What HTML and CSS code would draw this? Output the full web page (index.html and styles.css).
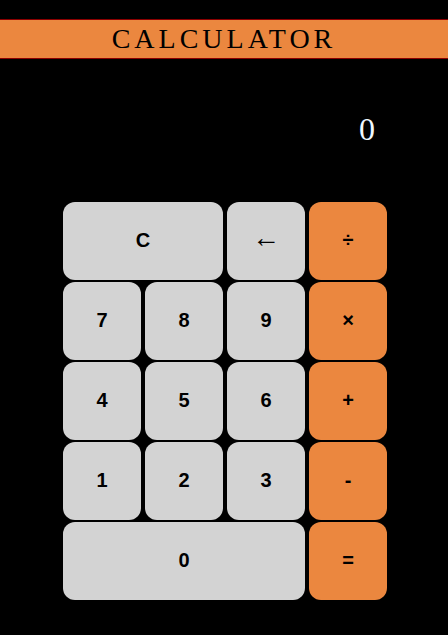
FILE: index.html
```
<!DOCTYPE html>
<html lang="en">
<head>
<meta charset="utf-8">
<meta name="viewport" content="width=device-width, initial-scale=1">
<title>Calculator</title>
<link rel="stylesheet" href="styles.css">
</head>
<body>
<h1 class="title">CALCULATOR</h1>
<main class="calculator">
  <output class="display" aria-label="Result">0</output>
  <div class="keys">
    <button type="button" class="key double">C</button>
    <button type="button" class="key arrow" aria-label="Backspace">←</button>
    <button type="button" class="key operator">÷</button>
    <button type="button" class="key">7</button>
    <button type="button" class="key">8</button>
    <button type="button" class="key">9</button>
    <button type="button" class="key operator">×</button>
    <button type="button" class="key">4</button>
    <button type="button" class="key">5</button>
    <button type="button" class="key">6</button>
    <button type="button" class="key operator">+</button>
    <button type="button" class="key">1</button>
    <button type="button" class="key">2</button>
    <button type="button" class="key">3</button>
    <button type="button" class="key operator">-</button>
    <button type="button" class="key triple">0</button>
    <button type="button" class="key operator">=</button>
  </div>
</main>
</body>
</html>
```
FILE: styles.css
```
* {
  box-sizing: border-box;
}

body {
  margin: 0;
  background: #000;
  font-family: "Liberation Serif", serif;
}

.title {
  margin: 19px 0 0;
  border: 1px solid #8b0000;
  border-width: 1px 0;
  background: #eb873f;
  color: #000;
  font-size: 28px;
  font-weight: 400;
  line-height: 38px;
  letter-spacing: 4px;
  text-align: center;
}

.calculator {
  width: fit-content;
  margin: 0 auto;
  padding: 50px 0 32px 2px;
}

.display {
  display: block;
  margin-bottom: 53px;
  padding: 0 12px;
  color: #f0f8ff;
  font-size: 32px;
  line-height: 40px;
  text-align: right;
}

.keys {
  display: grid;
  grid-template-columns: repeat(4, 78px);
  grid-auto-rows: 78px;
  gap: 2px 4px;
}

.key {
  padding: 0 0 2px;
  border: 0;
  border-radius: 12px;
  background: #d3d3d3;
  color: #000;
  font: bold 20px "Liberation Sans", Arial, sans-serif;
  cursor: pointer;
}

.double {
  grid-column: span 2;
}

.triple {
  grid-column: span 3;
}

.operator {
  background: #eb873f;
}

.arrow {
  padding-bottom: 6px;
  font-family: "Liberation Serif", serif;
  font-size: 28px;
  font-weight: 400;
}
```
